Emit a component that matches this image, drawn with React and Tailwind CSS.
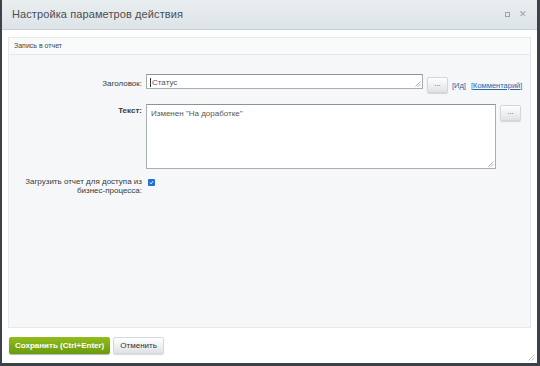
import React from "react";

function Grip() {
  return (
    <svg className="absolute right-[1px] bottom-[1px]" width="6" height="6" viewBox="0 0 6 6">
      <path d="M5.5 0.5L0.5 5.5M5.5 3L3 5.5" stroke="#9a9a9a" strokeWidth="0.8" />
    </svg>
  );
}

function DotsButton() {
  return (
    <button className="w-[21px] h-[16px] rounded-[2px] border border-[#d3d7da] bg-gradient-to-b from-[#ffffff] to-[#dfe3e6] shadow-[0_1px_1px_rgba(0,0,0,0.15)] text-[8px] leading-none text-[#555] flex items-center justify-center pb-[3px]">
      ...
    </button>
  );
}

export default function App() {
  return (
    <div
      className="w-[540px] h-[366px] bg-[#3c4247] pl-[2px] pr-[3px] pb-[3px] overflow-hidden"
      style={{ fontFamily: '"Liberation Sans", Arial, sans-serif' }}
    >
      <div className="h-full bg-white flex flex-col relative">
        {/* Header */}
        <div className="h-[30px] shrink-0 bg-gradient-to-b from-[#e9eef0] to-[#dde4e7] border-b border-[#c9d1d5] flex items-center pl-[10px] pr-[10px]">
          <div className="text-[11px] text-[#4a4f52] tracking-[0.1px]">Настройка параметров действия</div>
          <div className="ml-auto flex items-center gap-[9px] text-[#9aa3a8]">
            <div className="w-[5px] h-[5px] border border-[#9aa3a8]" />
            <div className="text-[9px] leading-none">✕</div>
          </div>
        </div>

        {/* Body */}
        <div className="flex-1 px-[6px] pt-[7px] flex flex-col">
          <div className="flex-1 bg-[#f5f7f8] border border-[#e4e9ec] flex flex-col">
            <div className="h-[17px] border-b border-[#e4e9ec] bg-[#f9fbfb] flex items-center pl-[5px] text-[7px] text-[#444]">
              Запись в отчет
            </div>

            <div className="pt-[19px] flex flex-col text-[8px] text-[#3a3a3a]">
              {/* Заголовок */}
              <div className="flex items-start">
                <div className="w-[137px] text-right pr-[4px] pt-[4px]">Заголовок:</div>
                <div className="relative w-[277px] h-[15px] bg-white border border-[#a9aeb2] border-t-[#8d9398] pl-[3px] pt-[2px] text-[#555]">
                  <span className="border-l border-[#333] pl-[1px]">Статус</span>
                  <Grip />
                </div>
                <div className="ml-[4px] mt-[3px]">
                  <DotsButton />
                </div>
                <div className="ml-[4px] mt-[6px] text-[7.5px] text-[#2a66a8] flex gap-[5px]">
                  <span>[Ид]</span>
                  <span>
                    [<span className="underline">Комментарий</span>]
                  </span>
                </div>
              </div>

              {/* Текст */}
              <div className="flex items-start mt-[11px]">
                <div className="w-[137px] text-right pr-[4px] pt-[1px] font-bold">Текст:</div>
                <div className="relative w-[350px] h-[65px] bg-white border border-[#a9aeb2] border-t-[#8d9398] pl-[4px] pt-[3px] text-[#555]">
                  Изменен "На доработке"
                  <Grip />
                </div>
                <div className="ml-[4px] mt-[1px]">
                  <DotsButton />
                </div>
              </div>

              {/* Checkbox */}
              <div className="flex items-start mt-[7px]">
                <div className="w-[137px] text-right pr-[4px] leading-[9px] pt-[1px]">
                  Загрузить отчет для доступа из
                  <br />
                  бизнес-процесса:
                </div>
                <div className="ml-[2px] mt-[3px] w-[7px] h-[7px] rounded-[1px] bg-[#1f6fd6] flex items-center justify-center">
                  <svg width="5" height="5" viewBox="0 0 5 5">
                    <path d="M0.8 2.6L2 3.8L4.2 1.2" stroke="white" strokeWidth="1" fill="none" />
                  </svg>
                </div>
              </div>
            </div>
          </div>
        </div>

        {/* Footer */}
        <div className="h-[35px] shrink-0 flex items-start pl-[7px] pt-[9px] gap-[3px]">
          <button className="h-[17px] px-[6px] rounded-[2px] bg-gradient-to-b from-[#93bd1d] to-[#6a9a0e] text-white text-[8px] font-bold shadow-[0_1px_1px_rgba(0,0,0,0.3)]">
            Сохранить (Ctrl+Enter)
          </button>
          <button className="h-[17px] px-[6px] rounded-[2px] bg-gradient-to-b from-[#ffffff] to-[#dfe3e6] border border-[#d5d9dc] text-[#333] text-[8px] shadow-[0_1px_1px_rgba(0,0,0,0.15)]">
            Отменить
          </button>
        </div>

        <svg className="absolute right-[2px] bottom-[2px]" width="7" height="7" viewBox="0 0 7 7">
          <path d="M6.5 0.5L0.5 6.5M6.5 3.5L3.5 6.5" stroke="#b0b0b0" strokeWidth="0.8" />
        </svg>
      </div>
    </div>
  );
}
